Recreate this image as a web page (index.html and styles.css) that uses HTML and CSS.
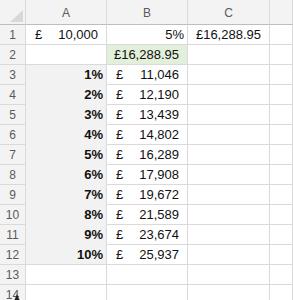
FILE: index.html
```html
<!DOCTYPE html>
<html>
<head>
<meta charset="utf-8">
<link rel="stylesheet" href="styles.css">
</head>
<body>
<div class="sheet">
  <div class="corner"><span class="tri"></span><span class="dot"></span></div>
  <div class="ch">A</div><div class="ch">B</div><div class="ch">C</div><div class="ch"></div>

  <div class="rh">1</div>
  <div class="c acct"><span>£</span><span>10,000</span></div>
  <div class="c r pct">5%</div>
  <div class="c r cur">£16,288.95</div>
  <div class="c"></div>

  <div class="rh">2</div>
  <div class="c"></div>
  <div class="c r cur green">£16,288.95</div>
  <div class="c"></div>
  <div class="c"></div>

  <div class="rh">3</div><div class="c r shade">1%</div><div class="c acct"><span>£</span><span>11,046</span></div><div class="c"></div><div class="c"></div>
  <div class="rh">4</div><div class="c r shade">2%</div><div class="c acct"><span>£</span><span>12,190</span></div><div class="c"></div><div class="c"></div>
  <div class="rh">5</div><div class="c r shade">3%</div><div class="c acct"><span>£</span><span>13,439</span></div><div class="c"></div><div class="c"></div>
  <div class="rh">6</div><div class="c r shade">4%</div><div class="c acct"><span>£</span><span>14,802</span></div><div class="c"></div><div class="c"></div>
  <div class="rh">7</div><div class="c r shade">5%</div><div class="c acct"><span>£</span><span>16,289</span></div><div class="c"></div><div class="c"></div>
  <div class="rh">8</div><div class="c r shade">6%</div><div class="c acct"><span>£</span><span>17,908</span></div><div class="c"></div><div class="c"></div>
  <div class="rh">9</div><div class="c r shade">7%</div><div class="c acct"><span>£</span><span>19,672</span></div><div class="c"></div><div class="c"></div>
  <div class="rh">10</div><div class="c r shade">8%</div><div class="c acct"><span>£</span><span>21,589</span></div><div class="c"></div><div class="c"></div>
  <div class="rh">11</div><div class="c r shade">9%</div><div class="c acct"><span>£</span><span>23,674</span></div><div class="c"></div><div class="c"></div>
  <div class="rh">12</div><div class="c r shade last">10%</div><div class="c acct"><span>£</span><span>25,937</span></div><div class="c"></div><div class="c"></div>

  <div class="rh">13</div><div class="c"></div><div class="c"></div><div class="c"></div><div class="c"></div>
  <div class="rh">14<span class="cursor"></span></div><div class="c"></div><div class="c"></div><div class="c"></div><div class="c"></div>
</div>
</body>
</html>
```
FILE: styles.css
```css
html, body {
  margin: 0;
  padding: 0;
  background: #ffffff;
  overflow: hidden;
}
.sheet {
  display: grid;
  grid-template-columns: 26px 81px 81px 82px 23px;
  grid-template-rows: 25px repeat(14, 20px);
  font-family: "Liberation Sans", Arial, sans-serif;
  font-size: 13px;
  color: #111;
}
.sheet > div {
  box-sizing: border-box;
  border-right: 1px solid #dadada;
  border-bottom: 1px solid #dadada;
  display: flex;
  align-items: center;
  white-space: nowrap;
  overflow: hidden;
}
.corner {
  background: #f3f3f3;
  position: relative;
  border-bottom-color: #bdbdbd !important;
}
.tri {
  position: absolute;
  left: 10px;
  top: 10px;
  width: 0;
  height: 0;
  border-left: 13px solid transparent;
  border-bottom: 12px solid #d8d8d8;
}
.dot {
  position: absolute;
  left: 25px;
  top: 5px;
  width: 1px;
  height: 2px;
  background: #333;
}
.ch {
  background: #f3f3f3;
  justify-content: center;
  color: #5a5a5a;
  font-size: 12px;
  border-bottom-color: #bdbdbd !important;
  padding-top: 2px;
}
.rh {
  background: #f3f3f3;
  justify-content: center;
  color: #5a5a5a;
  font-size: 12px;
  position: relative;
  overflow: visible !important;
}
.c {
  background: #ffffff;
}
.acct {
  justify-content: space-between;
  padding: 0 8px 0 9px;
}
.r {
  justify-content: flex-end;
  padding-right: 3px;
}
.cur {
  padding-right: 8px;
}
.green {
  background: #e2efda;
}
.shade {
  background: #f2f2f2;
  font-weight: bold;
  border-bottom-color: #f2f2f2 !important;
}
.shade.last {
  border-bottom-color: #dadada !important;
}
.cursor {
  position: absolute;
  left: 14px;
  top: 9px;
  width: 0;
  height: 0;
  border-left: 3px solid transparent;
  border-right: 3px solid transparent;
  border-bottom: 7px solid #222;
}
```
